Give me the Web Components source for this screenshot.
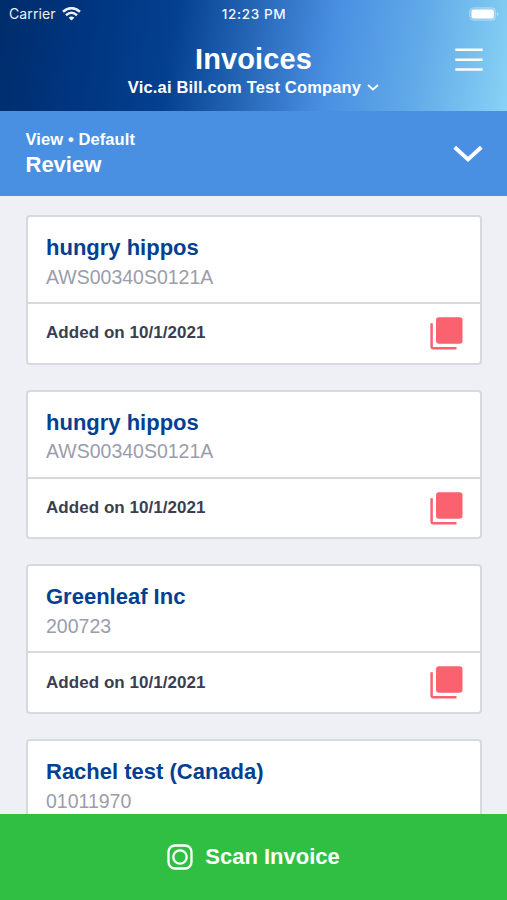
<!DOCTYPE html>
<html lang="en">
<head>
<meta charset="utf-8">
<title>Invoices</title>
<style>
html,body{margin:0;height:100%;overflow:hidden}
body{font-family:"Liberation Sans",Arial,sans-serif;background:#eef0f5}
</style>
</head>
<body>
<invoice-app></invoice-app>
<script>
const define = (name, html) => customElements.define(name, class extends HTMLElement {
  constructor() {
    super();
    this.attachShadow({ mode: 'open' }).innerHTML = html;
  }
});

define('status-bar', `
<style>
:host{display:grid;grid-template-columns:1fr auto 1fr;align-items:center;height:28px;padding:0 8px 0 9px;font-family:Inter,sans-serif;color:#fff;box-sizing:border-box}
.left{display:flex;align-items:center;gap:6px;font-size:14px;letter-spacing:.1px;opacity:.93}
.time{font-size:13.500px;font-weight:500;letter-spacing:.65px;opacity:.95}
.left span,.time{position:relative;top:-.5px}
.right{display:flex;justify-content:flex-end}
svg{display:block}
</style>
<div class="left"><span>Carrier</span>
<svg width="19" height="14" viewBox="0 0 19 14" fill="none" stroke="#fff" stroke-width="2.500"><path d="M1 4.800Q9.500-2.600 18 4.800"/><path d="M4 8.200Q9.500 3.400 15 8.200"/><path d="M9.500 13.600L6.600 10.700Q9.500 8.300 12.400 10.700Z" fill="#fff" stroke="none"/></svg></div>
<div class="time">12:23 PM</div>
<div class="right"><svg width="30" height="14" viewBox="0 0 30 14"><rect x=".7" y=".7" width="26" height="12.600" rx="4" fill="#fff" fill-opacity=".2" stroke="#fff" stroke-opacity=".28"/><rect x="2.500" y="2.500" width="22.400" height="9" rx="2.200" fill="#fff"/><path d="M28 5v4q1.500-.5 1.500-2t-1.500-2z" fill="#fff" fill-opacity=".4"/></svg></div>
`);

define('app-header', `
<style>
:host{display:block;height:111px;color:#fff;background:linear-gradient(99deg,#002d6b 0%,#003580 17%,#04408f 34%,#2464b5 48%,#4a90e2 65%,#62abe8 82%,#87d2f5 100%)}
.bar{display:grid;grid-template-columns:60px 1fr 60px;height:83px}
.titles{display:flex;flex-direction:column;align-items:center;padding-top:15px}
h1{margin:0;font-size:29px;line-height:32px;letter-spacing:.1px}
.company{display:flex;align-items:center;gap:6px;font-size:16.500px;line-height:20px;font-weight:bold;letter-spacing:.17px;margin-top:2px;white-space:nowrap}
.menu{padding:20px 0 0 8px}
svg{display:block}
</style>
<status-bar></status-bar>
<div class="bar"><span></span>
<div class="titles"><h1><slot name="title"></slot></h1>
<div class="company"><slot name="company"></slot><svg width="12" height="8" viewBox="0 0 12 8" fill="none" stroke="#fff" stroke-width="1.800"><path d="M1 2L6 6.500l5-4.500"/></svg></div></div>
<div class="menu"><svg width="28" height="24" viewBox="0 0 28 24" stroke="#fff" stroke-width="2.400"><path d="M.3 1.800h27.400M.3 11.700h27.400M.3 21.500h27.400"/></svg></div>
</div>`);

define('view-picker', `
<style>
:host{display:flex;justify-content:space-between;align-items:center;height:85px;padding:0 24px 0 25.500px;box-sizing:border-box;background:#4990e2;color:#fff;font-weight:bold}
.view{font-size:16.500px;line-height:20px;letter-spacing:.1px}
.name{font-size:22px;line-height:26px;margin-top:3px}
svg{display:block}
</style>
<div><div class="view">View • Default</div><div class="name"><slot></slot></div></div>
<svg width="30" height="18" viewBox="0 0 30 18" fill="none" stroke="#fff" stroke-width="3.900"><path d="M1.700 2.200L15 14.400l13.300-12.200"/></svg>`);

define('copies-icon', `
<style>:host{display:block}svg{display:block}</style>
<svg width="33" height="33" viewBox="0 0 33 33"><rect x="6" y=".3" width="26.500" height="26.500" rx="3" fill="#f9626e"/><path d="M1.600 6.300v23.200q0 1.800 1.800 1.800H26.500" fill="none" stroke="#f9626e" stroke-width="2.500"/></svg>`);

define('invoice-card', `
<style>
:host{display:flex;flex-direction:column;flex:none;height:149.700px;box-sizing:border-box;border:2px solid #d7d9df;border-radius:4px;background:#fff}
.top{height:68px;border-bottom:2px solid #d7d9df;padding:17px 18.500px 0}
.name{font-size:22px;line-height:28px;font-weight:bold;color:#043f92}
.number{font-size:19.500px;line-height:24px;color:#9b9dab;margin-top:2.500px}
.foot{flex:1;display:flex;align-items:center;justify-content:space-between;padding:0 17.500px 0 18.500px;font-size:17px;font-weight:bold;letter-spacing:.05px;color:#3c3d4f}
</style>
<div class="top"><div class="name"><slot name="name"></slot></div><div class="number"><slot name="number"></slot></div></div>
<div class="foot"><slot name="date"></slot><copies-icon></copies-icon></div>`);

define('scan-button', `
<style>
:host{display:flex;align-items:center;justify-content:center;gap:12px;height:86px;background:#30bf43;color:#fff;font-size:22px;font-weight:bold}
svg{display:block}
</style>
<svg width="26" height="26" viewBox="0 0 26 26" fill="none" stroke="#fff" stroke-width="2.300"><rect x="1.500" y="1.500" width="23" height="23" rx="6.500"/><circle cx="13" cy="13" r="6.700"/></svg>
<span><slot></slot></span>`);

define('invoice-app', `
<style>
:host{display:flex;flex-direction:column;width:507px;height:900px;overflow:hidden}
app-header,view-picker,scan-button{flex:none}
main{flex:1;min-height:0;overflow:hidden;display:flex;flex-direction:column;gap:25px;padding:19px 25px 0 25.500px;box-sizing:border-box}
</style>
<app-header><span slot="title">Invoices</span><span slot="company">Vic.ai Bill.com Test Company</span></app-header>
<view-picker>Review</view-picker>
<main>
<invoice-card><span slot="name">hungry hippos</span><span slot="number">AWS00340S0121A</span><span slot="date">Added on 10/1/2021</span></invoice-card>
<invoice-card><span slot="name">hungry hippos</span><span slot="number">AWS00340S0121A</span><span slot="date">Added on 10/1/2021</span></invoice-card>
<invoice-card><span slot="name">Greenleaf Inc</span><span slot="number">200723</span><span slot="date">Added on 10/1/2021</span></invoice-card>
<invoice-card><span slot="name">Rachel test (Canada)</span><span slot="number">01011970</span></invoice-card>
</main>
<scan-button>Scan Invoice</scan-button>`);
</script>
</body>
</html>
